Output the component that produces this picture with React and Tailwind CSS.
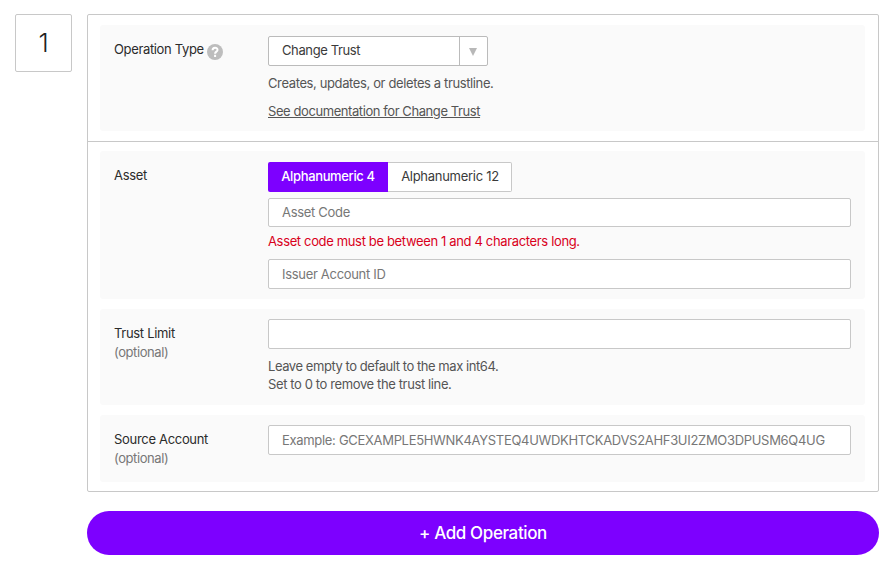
function Label({ children, optional }) {
  return (
    <div className="w-[154px] shrink-0 pt-1 tracking-[-0.31px] text-[#2b2b2b]">
      <div className="flex h-[19px] items-center whitespace-nowrap">{children}</div>
      {optional && <div className="flex h-[19px] items-center tracking-[-0.42px] text-[#777]">(optional)</div>}
    </div>
  );
}

function Row({ className, children }) {
  return (
    <div className={`mr-[13px] ml-3 flex rounded-[3px] bg-[#fafafa] pt-2.5 pr-3.5 pl-3.5 ${className}`}>
      {children}
    </div>
  );
}

function Field({ className, label, placeholder }) {
  return (
    <input
      aria-label={label}
      placeholder={placeholder}
      className={`block w-full rounded-[2px] border border-[#c8c8c8] bg-white px-[13px] text-[13px] tracking-[-0.31px] placeholder:text-[#777] placeholder:opacity-100 ${className}`}
    />
  );
}

export default function App() {
  return (
    <div className="flex h-[576px] w-[894px] items-start bg-white pt-3.5 pl-[15px] font-['Inter','Liberation_Sans',sans-serif] text-[13px] leading-[18px] tracking-[-0.38px] text-[#555]">
      <div className="flex h-[58px] w-[57px] shrink-0 items-center justify-center rounded-[2px] border border-[#c8c8c8] text-[26px] font-light text-[#222]">
        1
      </div>
      <div className="ml-[15px] w-[792px]">
        <div className="h-[478px] rounded-[2px] border border-[#c8c8c8]">
          <div className="h-[127px] border-b border-[#c8c8c8] pt-2.5">
            <Row className="h-[106px]">
              <Label>
                <span className="tracking-[-0.35px]">Operation Type</span>
                <svg className="mt-[7px] ml-[3px]" width="16" height="16" viewBox="0 0 16 16">
                  <circle cx="8" cy="8" r="8" fill="#bdbdbd" />
                  <path d="M5.6 6.3C5.6 2.9 10.5 3 10.5 5.9C10.5 7.7 8.1 7.6 8.1 9.7M8.1 10.8V12.9" fill="none" stroke="#fff" strokeWidth="2" />
                </svg>
              </Label>
              <div className="pt-px">
                <button className="flex h-[30px] w-[220px] items-stretch rounded-[2px] border border-[#bbb] bg-white text-[#3a3a3a]">
                  <span className="flex w-[191px] items-center border-r border-[#bbb] pb-0.5 pl-[13px]">Change Trust</span>
                  <span className="flex flex-1 items-center justify-center">
                    <svg className="mt-0.5 -ml-px" width="8" height="8" viewBox="0 0 8 8" fill="#b8b8b8"><path d="M0 0H8L4 8Z" /></svg>
                  </span>
                </button>
                <p className="mt-2">Creates, updates, or deletes a trustline.</p>
                <a className="mt-2.5 block tracking-[-0.42px] underline">See documentation for Change Trust</a>
              </div>
            </Row>
          </div>
          <div className="flex flex-col gap-2.5 pt-[9px]">
            <Row className="h-[148px]">
              <Label>Asset</Label>
              <div className="flex-1 pt-px">
                <div className="flex h-[30px] tracking-[-0.36px]">
                  <button className="w-[120px] rounded-l-[2px] bg-[#7d00ff] pb-0.5 font-medium text-white">Alphanumeric 4</button>
                  <button className="w-[124px] rounded-r-[2px] border border-l-0 border-[#c8c8c8] bg-white pb-0.5 pl-px tracking-[-0.28px] text-[#3a3a3a]">Alphanumeric 12</button>
                </div>
                <Field className="mt-1.5 h-[29px] pb-0.5" label="Asset Code" placeholder="Asset Code" />
                <p className="mt-[5px] tracking-[-0.35px] text-[#d9001b]">Asset code must be between 1 and 4 characters long.</p>
                <Field className="mt-[9px] h-[30px]" label="Issuer Account ID" placeholder="Issuer Account ID" />
              </div>
            </Row>
            <Row className="h-[96px]">
              <Label optional>Trust Limit</Label>
              <div className="flex-1">
                <Field className="h-[30px]" label="Trust Limit" />
                <p className="mt-2"><span className="tracking-[-0.44px]">Leave empty to default to the max int64.</span><br />Set to 0 to remove the trust line.</p>
              </div>
            </Row>
            <Row className="h-[67px]">
              <Label optional>Source Account</Label>
              <div className="flex-1">
                <Field className="h-[30px]" label="Source Account" placeholder="Example: GCEXAMPLE5HWNK4AYSTEQ4UWDKHTCKADVS2AHF3UI2ZMO3DPUSM6Q4UG" />
              </div>
            </Row>
          </div>
        </div>
        <button className="mt-[19px] h-11 w-full rounded-full bg-[#7d00ff] text-[17px] font-medium tracking-[-0.38px] text-white">+ Add Operation</button>
      </div>
    </div>
  );
}
